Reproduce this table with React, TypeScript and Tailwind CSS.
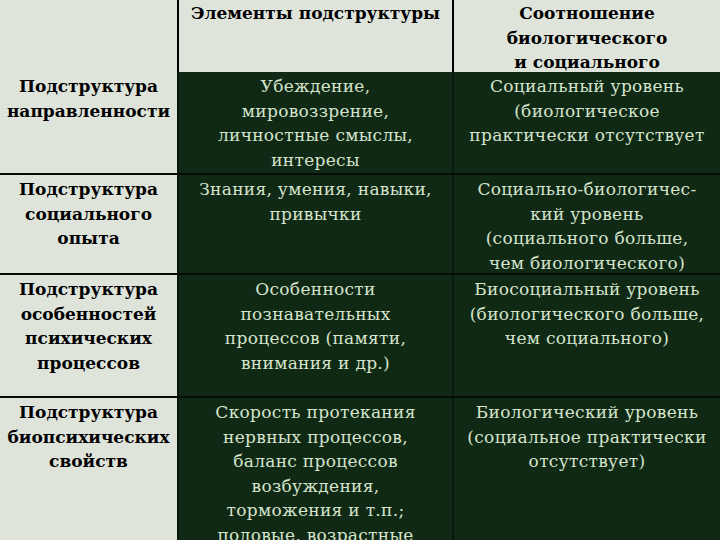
const rows: { h: string; a: string[]; b: string[]; c: string[] }[] = [
  {
    h: "h-[101px]",
    a: ["Подструктура", "направленности"],
    b: ["Убеждение,", "мировоззрение,", "личностные смыслы,", "интересы"],
    c: ["Социальный уровень", "(биологическое", "практически отсутствует"],
  },
  {
    h: "h-[100px]",
    a: ["Подструктура", "социального", "опыта"],
    b: ["Знания, умения, навыки,", "привычки"],
    c: ["Социально-биологичес-", "кий уровень", "(социального больше,", "чем биологического)"],
  },
  {
    h: "h-[123px]",
    a: ["Подструктура", "особенностей", "психических", "процессов"],
    b: ["Особенности", "познавательных", "процессов (памяти,", "внимания и др.)"],
    c: ["Биосоциальный уровень", "(биологического больше,", "чем социального)"],
  },
  {
    h: "h-[146px]",
    a: ["Подструктура", "биопсихических", "свойств"],
    b: [
      "Скорость протекания",
      "нервных процессов,",
      "баланс процессов",
      "возбуждения,",
      "торможения и т.п.;",
      "половые, возрастные",
    ],
    c: ["Биологический уровень", "(социальное практически", "отсутствует)"],
  },
];

function Lines(props: { lines: string[] }) {
  return (
    <>
      {props.lines.map((l, i) => (
        <div key={i} className="whitespace-nowrap">
          {l}
        </div>
      ))}
    </>
  );
}

export default function App() {
  return (
    <div
      className="h-[540px] w-[720px] overflow-hidden bg-[#0a170b] text-[17px] leading-[24.5px]"
      style={{ fontFamily: '"DejaVu Serif", "Liberation Serif", serif' }}
    >
      <div className="grid h-[72px] grid-cols-[177px_273px_1fr] gap-x-[2px] border-b-[3px] border-black bg-black font-bold text-black">
        <div className="bg-[#dfe4db]" />
        <div className="bg-[#dfe4db] pt-px text-center">
          <Lines lines={["Элементы подструктуры"]} />
        </div>
        <div className="bg-[#dfe4db] pt-px text-center">
          <Lines lines={["Соотношение", "биологического", "и социального"]} />
        </div>
      </div>
      {rows.map((r, i) => (
        <div
          key={i}
          className={`grid ${r.h} shrink-0 grid-cols-[177px_273px_1fr] gap-x-[2px] overflow-hidden ${
            i > 0 ? "border-t-2 border-[#050c05]" : ""
          } bg-[#0a170b]`}
        >
          <div className="bg-[#dfe4db] pt-[2px] text-center font-bold text-black">
            <Lines lines={r.a} />
          </div>
          <div className="bg-[#0f2914] pt-[2px] text-center tracking-[0.3px] text-[#d6e4cd]">
            <Lines lines={r.b} />
          </div>
          <div className="bg-[#0f2914] pt-[2px] text-center tracking-[0.3px] text-[#d6e4cd]">
            <Lines lines={r.c} />
          </div>
        </div>
      ))}
    </div>
  );
}
